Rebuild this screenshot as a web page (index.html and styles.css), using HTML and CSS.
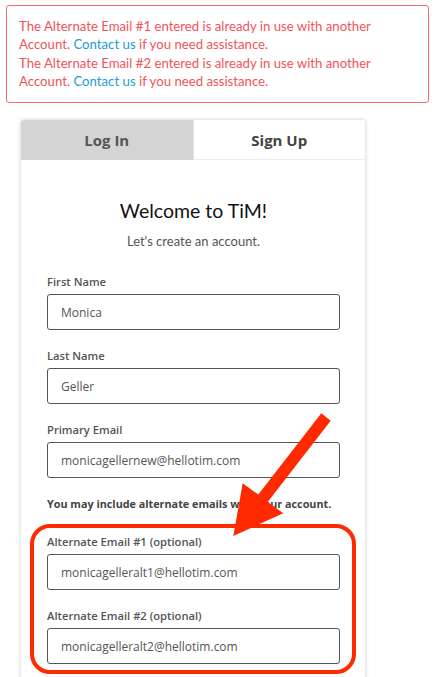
FILE: index.html
```html
<!DOCTYPE html>
<html lang="en">

<head>
    <meta charset="UTF-8" />
    <meta name="viewport" content="width=device-width, initial-scale=1.0" />
    <title>Sign Up - TiM</title>
    <link rel="stylesheet" href="styles.css">
</head>

<body>
    <div class="error-box">
        <p>The Alternate Email #1 entered is already in use with another<br>Account. <span class="link">Contact us</span> if you need assistance.</p>
        <p>The Alternate Email #2 entered is already in use with another<br>Account. <span class="link">Contact us</span> if you need assistance.</p>
    </div>

    <div class="card">
        <div class="tabs">
            <div class="tab">Log In</div>
            <div class="tab active">Sign Up</div>
        </div>

        <div class="card-body">
            <h1 class="title">Welcome to TiM!</h1>
            <div class="subtitle">Let's create an account.</div>

            <div class="field">
                <label class="field-label">First Name</label>
                <div class="field-input">Monica</div>
            </div>

            <div class="field">
                <label class="field-label">Last Name</label>
                <div class="field-input">Geller</div>
            </div>

            <div class="field">
                <label class="field-label">Primary Email</label>
                <div class="field-input">monicagellernew@hellotim.com</div>
            </div>

            <div class="note">You may include alternate emails with your account.</div>

            <div class="field">
                <label class="field-label">Alternate Email #1 (optional)</label>
                <div class="field-input">monicagelleralt1@hellotim.com</div>
            </div>

            <div class="field">
                <label class="field-label">Alternate Email #2 (optional)</label>
                <div class="field-input">monicagelleralt2@hellotim.com</div>
            </div>
        </div>
    </div>

    <!-- annotation drawn over the screenshot -->
    <svg class="annotation" width="438" height="677" viewBox="0 0 438 677">
        <rect x="32" y="526" width="322" height="146" rx="18" ry="18" fill="none" stroke="#ff2a00" stroke-width="4" />
        <polygon points="321.3,413.3 330.7,420.7 267.7,502 283.3,513.3 233.3,536 242.7,483.3 258.3,494.6" fill="#ff2a00" />
    </svg>
</body>

</html>
```

FILE: styles.css
```css
* {
    margin: 0;
    padding: 0;
    box-sizing: border-box;
}

body {
    font-family: 'Lato', 'Open Sans', sans-serif;
    background: #ffffff;
    color: #333;
    width: 438px;
    height: 677px;
    overflow: hidden;
    position: relative;
}

/* Error message box */
.error-box {
    margin: 5px 9px 0 6px;
    padding: 11px 12px 12px 12px;
    border: 1px solid #f26a6f;
    border-radius: 3px;
    color: #f2535b;
    font-size: 13.2px;
    line-height: 18.3px;
}

.error-box .link {
    display: inline-block;
    color: #1e9bd7;
}

/* Card with tabs */
.card {
    width: 344px;
    margin: 17px 0 0 21px;
    background: #fff;
    border-radius: 3px 3px 0 0;
    box-shadow: 0 0 4px rgba(0, 0, 0, 0.22);
}

.tabs {
    display: flex;
    height: 40px;
}

.tab {
    flex: 1;
    display: flex;
    align-items: center;
    justify-content: center;
    font-family: 'Open Sans', sans-serif;
    font-weight: 700;
    font-size: 15px;
    color: #555;
    background: #d4d4d4;
    border-radius: 3px 0 0 0;
}

.tab.active {
    background: #fff;
    color: #444;
    border-bottom: 1px solid #ececec;
    border-left: 1px solid #e2e2e2;
    border-radius: 0 3px 0 0;
}

.card-body {
    padding: 39px 25px 20px 26px;
}

.title {
    font-weight: 400;
    font-size: 19.5px;
    line-height: 24px;
    color: #111;
    text-align: center;
}

.subtitle {
    margin-top: 10px;
    font-size: 13px;
    line-height: 16px;
    color: #555;
    text-align: center;
    margin-bottom: 25px;
}

.field {
    display: flex;
    flex-direction: column;
    gap: 4px;
    margin-bottom: 18px;
}

.field-label {
    font-family: 'Open Sans', sans-serif;
    font-weight: 600;
    font-size: 11.2px;
    line-height: 16px;
    color: #555;
}

.field-input {
    height: 36px;
    display: flex;
    align-items: center;
    padding: 0 13px;
    border: 1px solid #555;
    border-radius: 3px;
    font-family: 'Open Sans', sans-serif;
    font-size: 12px;
    color: #555;
}

.note {
    margin: 1px 0 22px;
    font-family: 'Open Sans', sans-serif;
    font-weight: 700;
    font-size: 10.8px;
    line-height: 16px;
    color: #444;
}

.annotation {
    position: absolute;
    top: 0;
    left: 0;
    pointer-events: none;
}
```
